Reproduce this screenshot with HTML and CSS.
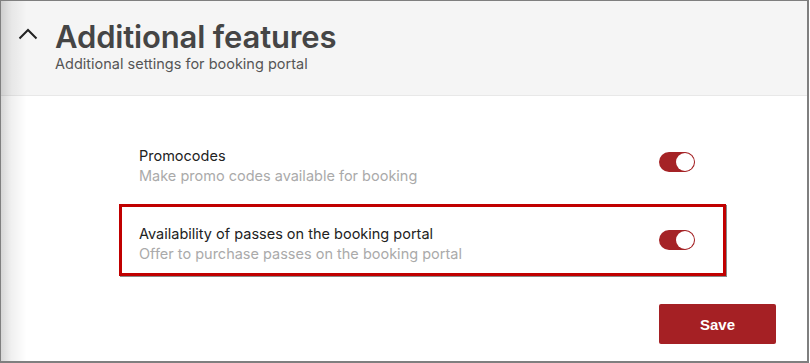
FILE: index.html
```html
<!DOCTYPE html>
<html lang="en">
<head>
  <meta charset="UTF-8" />
  <meta name="viewport" content="width=device-width, initial-scale=1" />
  <title>Additional features</title>
  <link rel="stylesheet" href="styles.css">
</head>
<body>
  <div class="panel">
    <header class="panel-head">
      <button class="collapse" aria-label="Collapse">
        <svg width="20" height="13" viewBox="0 0 20 13"><path d="M1.5 11.5 L10 3 L18.5 11.5" fill="none" stroke="#222" stroke-width="2"/></svg>
      </button>
      <div class="head-text">
        <h1>Additional features</h1>
        <p>Additional settings for booking portal</p>
      </div>
    </header>
    <section class="panel-body">
      <div class="settings">
        <div class="setting">
          <div class="setting-text">
            <div class="setting-title">Promocodes</div>
            <div class="setting-desc">Make promo codes available for booking</div>
          </div>
          <span class="toggle on"></span>
        </div>
        <div class="setting highlighted">
          <div class="setting-text">
            <div class="setting-title">Availability of passes on the booking portal</div>
            <div class="setting-desc">Offer to purchase passes on the booking portal</div>
          </div>
          <span class="toggle on"></span>
        </div>
      </div>
      <div class="actions">
        <button class="save">Save</button>
      </div>
    </section>
  </div>
</body>
</html>
```

FILE: styles.css
```css
* {
  margin: 0;
  padding: 0;
  box-sizing: border-box;
}
body {
  font-family: 'Inter', 'Liberation Sans', sans-serif;
  background: #fff;
  width: 810px;
  height: 363px;
  overflow: hidden;
}
.panel {
  position: relative;
  width: 809px;
  height: 363px;
  border: 1px solid #7f7f7f;
  border-width: 1px 2px 2px 1px;
  background: #fff;
}
.panel::before {
  content: "";
  position: absolute;
  top: 0;
  left: 0;
  bottom: 0;
  width: 26px;
  background: linear-gradient(90deg, rgba(0,0,0,0.16) 0%, rgba(0,0,0,0.06) 40%, rgba(0,0,0,0) 100%);
  pointer-events: none;
}
.panel-head {
  display: flex;
  align-items: flex-start;
  gap: 17px;
  height: 95px;
  padding: 20px 0 0 17px;
  background: #f5f5f5;
  border-bottom: 1px solid #e8e8e8;
}
.collapse {
  border: 0;
  background: none;
  margin-top: 6px;
  width: 20px;
  height: 13px;
  display: flex;
}
.head-text h1 {
  font-size: 31px;
  font-weight: 600;
  color: #454545;
  line-height: 32px;
  letter-spacing: -0.15px;
}
.head-text p {
  margin-top: 2px;
  font-size: 14.5px;
  color: #555;
  line-height: 18px;
}
.panel-body {
  padding: 30px 31px 0 118px;
}
.settings {
  display: flex;
  flex-direction: column;
  gap: 6px;
  width: 607px;
}
.setting {
  display: flex;
  align-items: center;
  justify-content: space-between;
  padding: 17px 28px 9px 17px;
  border: 3px solid transparent;
}
.setting.highlighted {
  border-color: #c00000;
  box-shadow: 1px 1px 0 #8a8a8a;
}
.setting-title {
  font-size: 14.5px;
  color: #222;
  line-height: 20px;
}
.setting-desc {
  font-size: 14.5px;
  color: #aaa;
  line-height: 20px;
}
.toggle {
  position: relative;
  width: 36px;
  height: 20px;
  border-radius: 10px;
  background: #a52326;
  margin-top: -8px;
}
.toggle::after {
  content: "";
  position: absolute;
  top: 1px;
  right: 1px;
  width: 18px;
  height: 18px;
  border-radius: 50%;
  background: #fff;
  box-shadow: 0 0 0 0.5px #a52326;
}
.actions {
  display: flex;
  justify-content: flex-end;
  width: 657px;
  margin-top: 28px;
}
.save {
  width: 117px;
  height: 40px;
  border: 0;
  border-radius: 2px;
  background: #a52024;
  color: #fff;
  font-family: 'Liberation Sans', Arial, sans-serif;
  font-weight: bold;
  font-size: 15px;
}
```
